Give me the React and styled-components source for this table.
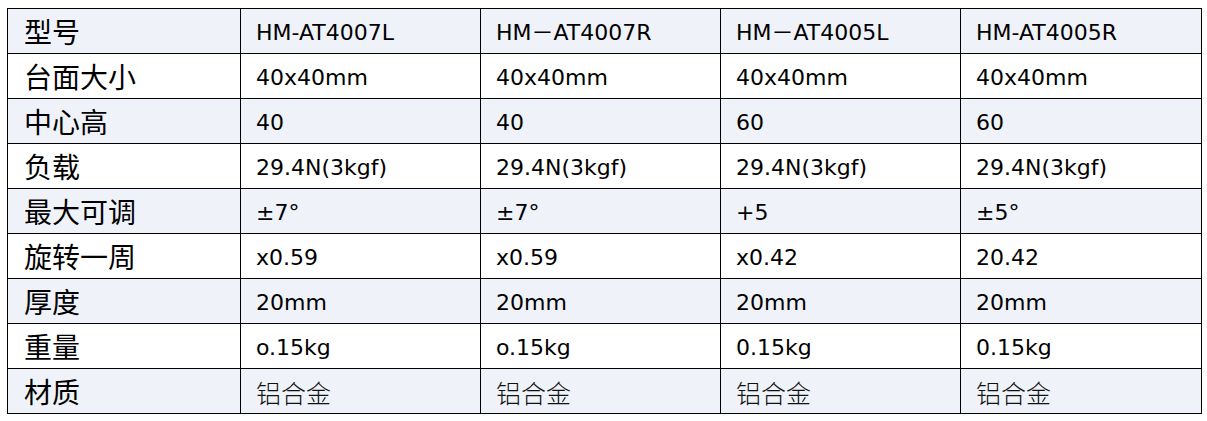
import React from "react";
import styled, { createGlobalStyle } from "styled-components";

const Global = createGlobalStyle`
  html, body { margin: 0; padding: 0; background: #ffffff; }
  body { font-family: "DejaVu Sans", "Noto Sans CJK SC", sans-serif; color: #000; }
`;

const Page = styled.div`
  padding: 8px 0 0 7px;
`;

const Table = styled.table`
  border-collapse: collapse;
  table-layout: fixed;
  width: 1194px;
  border: 1px solid #000;
`;

const Col = styled.col`
  width: ${(p) => p.$width}px;
`;

const Row = styled.tr`
  height: 45px;
  background: ${(p) => (p.$shaded ? "#eff3f9" : "#ffffff")};
`;

const Cell = styled.td`
  border: 1px solid #000;
  padding: 3px 0 0 15px;
  vertical-align: middle;
  white-space: nowrap;
  font-family: "DejaVu Sans", "Noto Sans CJK SC", sans-serif;
  font-size: 22px;
  line-height: 24px;
  color: #000;
`;

const Label = styled(Cell)`
  padding: 0 0 0 16px;
  font-family: "Noto Sans CJK SC", sans-serif;
  font-size: 28px;
  line-height: 30px;
`;

const Material = styled(Cell)`
  padding: 1px 0 0 15px;
  font-family: "Noto Sans CJK SC", serif;
  font-weight: 300;
  font-size: 25px;
  line-height: 28px;
  color: #111;
`;

const columns = [233, 240, 240, 240, 241];

const rows = [
  ["型号", ["HM-AT4007L", "HM－AT4007R", "HM－AT4005L", "HM-AT4005R"]],
  ["台面大小", ["40x40mm", "40x40mm", "40x40mm", "40x40mm"]],
  ["中心高", ["40", "40", "60", "60"]],
  ["负载", ["29.4N(3kgf)", "29.4N(3kgf)", "29.4N(3kgf)", "29.4N(3kgf)"]],
  ["最大可调", ["±7°", "±7°", "+5", "±5°"]],
  ["旋转一周", ["x0.59", "x0.59", "x0.42", "20.42"]],
  ["厚度", ["20mm", "20mm", "20mm", "20mm"]],
  ["重量", ["o.15kg", "o.15kg", "0.15kg", "0.15kg"]],
  ["材质", ["铝合金", "铝合金", "铝合金", "铝合金"], true],
];

export default function App() {
  return (
    <>
      <Global />
      <Page>
        <Table>
          <colgroup>
            {columns.map((w, i) => (
              <Col key={i} $width={w} />
            ))}
          </colgroup>
          <tbody>
            {rows.map(([label, values, material], i) => (
              <Row key={label} $shaded={i % 2 === 0}>
                <Label>{label}</Label>
                {values.map((v, j) =>
                  material ? <Material key={j}>{v}</Material> : <Cell key={j}>{v}</Cell>
                )}
              </Row>
            ))}
          </tbody>
        </Table>
      </Page>
    </>
  );
}
